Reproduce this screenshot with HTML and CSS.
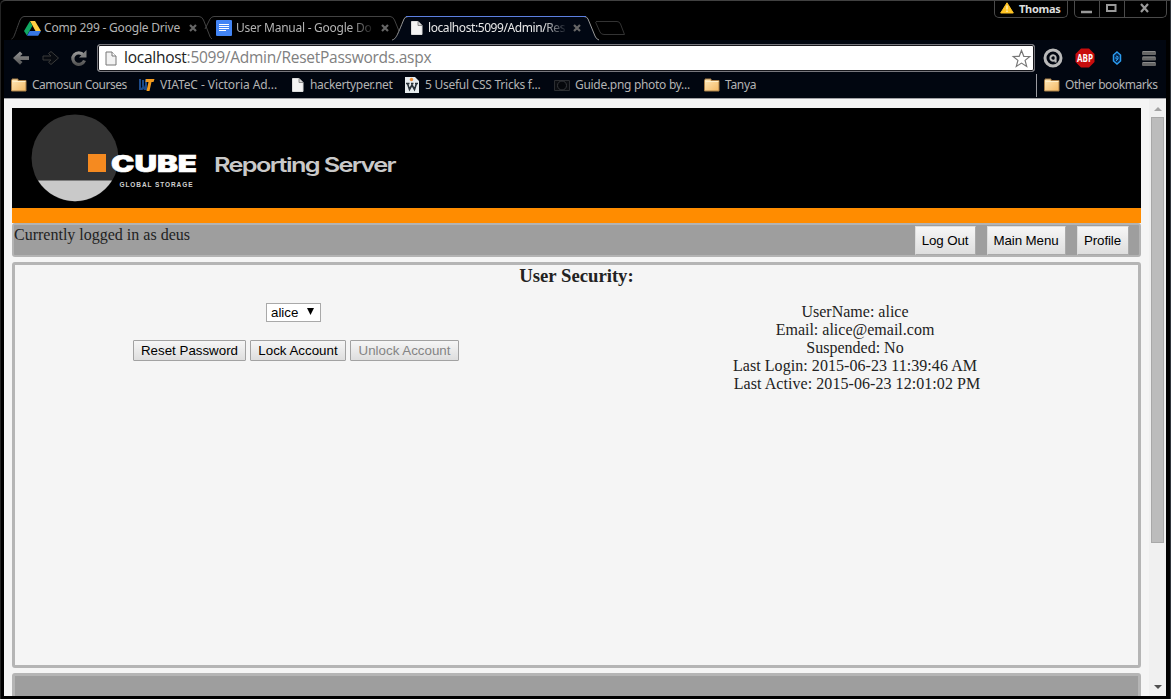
FILE: index.html
```html
<!DOCTYPE html>
<html lang="en">
<head>
<meta charset="utf-8">
<title>localhost:5099/Admin/ResetPasswords.aspx</title>
<link rel="stylesheet" href="styles.css">
</head>
<body>
<svg class="defs" width="0" height="0">
  <defs>
    <linearGradient id="fold" x1="0" y1="0" x2="1" y2="1"><stop offset="0" stop-color="#ffe9bb"/><stop offset="1" stop-color="#f3b863"/></linearGradient>
    <linearGradient id="mute" x1="0" y1="0" x2="0" y2="1"><stop offset="0" stop-color="#959595"/><stop offset="1" stop-color="#555"/></linearGradient>
  </defs>
  <symbol id="folder" viewBox="0 0 16 14"><path d="M1 2V1h6v1.500h8V13H.5V2.500z" fill="url(#fold)" stroke="#a87f49"/><path d="M1.500 3.500h13" stroke="#fff0cb"/></symbol>
  <symbol id="file" viewBox="0 0 12 14"><path d="M.5.500h6.500l4 4v9H.5z" fill="#f4f4f4" stroke="#ddd"/><path d="M7 .5v4h4" fill="#d5d5d5" stroke="#777" stroke-width=".8"/></symbol>
  <symbol id="close" viewBox="0 0 8 8"><path d="M1 1l6 6M7 1L1 7" stroke="#666" stroke-width="2.200"/></symbol>
  <symbol id="warn" viewBox="0 0 14 12"><path d="M7 .8L13.300 11H.7z" fill="#ffc425" stroke="#ffc425" stroke-linejoin="round"/><path d="M7 3.500v4M7 8.500v1.500" stroke="#fff3c5" stroke-width="1.300"/></symbol>
</svg>
<div class="window">
  <header class="titlebar">
    <div class="tabs">
      <div class="tab">
        <svg class="tab-shape" width="208" height="25"><path d="M-.5 23C2 22 2 20 8 4Q9.500.500 12 .5H187Q190 .5 191.500 4L197 18Q198 22 200 23" fill="none" stroke="#434343"/></svg>
        <svg class="tab-icon" width="17" height="15" viewBox="0 0 17 15"><path d="M6 0h5l6 10h-5.500z" fill="#ffcf43"/><path d="M5.800.200L8.500 4.700 2.900 14.500 0 10z" fill="#11a861"/><path d="M5.700 10H17l-2.800 4.700H3z" fill="#3777e3"/></svg>
        <span class="tab-title t1">Comp 299 - Google Drive</span>
        <svg class="tab-close" width="8" height="8"><use href="#close"/></svg>
      </div>
      <div class="tab">
        <svg class="tab-shape" width="208" height="25"><path d="M1 13L6 3Q7.500.500 10 .5H186Q189 .5 190.500 4L195 15" fill="none" stroke="#434343"/></svg>
        <svg class="tab-icon" width="17" height="16" viewBox="0 0 17 16"><rect x="0" width="16" height="16" rx="1" fill="#4385f5"/><path d="M3 4.500h10M3 6.500h10M3 8.500h10M3 10.500h7" stroke="#fff"/></svg>
        <span class="tab-title t2 fade">User Manual - Google Do</span>
        <svg class="tab-close" width="8" height="8"><use href="#close"/></svg>
      </div>
      <div class="tab active">
        <svg class="tab-shape" width="212" height="25"><path d="M-4 24C0 23 1 20 8 3Q9 .5 12 .5H188Q191 .5 192 3L199 20Q200 23 203 24" fill="#010713" stroke="#999"/><path d="M10 .5H190" stroke="#5c7fe0"/></svg>
        <svg class="tab-icon" width="17" height="14" viewBox="0 0 17 14"><use href="#file" width="12" height="14"/></svg>
        <span class="tab-title t3 fade">localhost:5099/Admin/Res</span>
        <svg class="tab-close" width="8" height="8"><use href="#close"/></svg>
      </div>
      <svg class="newtab" width="32" height="16"><path d="M2 .5H23Q25.500.500 26.500 3L30.500 13.500H10Q7 13.500 6 11L1.500 1" fill="none" stroke="#333"/></svg>
    </div>
    <div class="profile"><svg width="14" height="12"><use href="#warn"/></svg><span>Thomas</span></div>
    <div class="controls">
      <span class="ctl min"><svg width="11" height="10"><path d="M0 8h11" stroke="#999" stroke-width="2.500"/></svg></span>
      <span class="ctl max"><svg width="11" height="10"><rect x="1" y="1" width="8.500" height="6" fill="none" stroke="#999" stroke-width="2"/></svg></span>
      <span class="ctl shut"><svg width="10" height="10"><path d="M1 0l7 8M8 0L1 8" stroke="#999" stroke-width="2.200"/></svg></span>
    </div>
  </header>
  <div class="toolbar">
    <svg class="nav back" width="17" height="14"><path d="M0 7L7 .5 9.500 3 7 5.200H16V9H7L9.500 11 7 13.700z" fill="url(#mute)"/></svg>
    <svg class="nav forward" width="18" height="14"><path d="M1 5H9L6.500 2.500 9 .5 16.500 7 9 13.500 6.500 11.200 9 9H1z" fill="#080b11" stroke="#3b3b3b"/></svg>
    <svg class="nav reload" width="17" height="16"><path d="M12.500 5A6 5.700 0 1 0 13.500 10.500" fill="none" stroke="url(#mute)" stroke-width="3.200"/><path d="M15.500 0V7.500H8z" fill="#808080"/></svg>
    <div class="omnibox">
      <svg width="12" height="15" viewBox="0 0 12 15"><path d="M1 1h6l4 4v9H1z" fill="#f2f2f2" stroke="#777"/><path d="M7 1v4h4" fill="#fff" stroke="#777"/></svg>
      <span class="url"><b>localhost</b>:5099/Admin/ResetPasswords.aspx</span>
      <svg class="star" width="19" height="19" viewBox="0 0 19 19"><path d="M9.500 1.500l2.300 5.800 6 .2-4.700 3.900 1.600 6-5.200-3.300-5.200 3.300 1.600-6L1.200 7.500l6-.2z" fill="#fff" stroke="#777" stroke-width="1.200"/></svg>
    </div>
    <svg class="ext" width="20" height="20"><circle cx="10" cy="10" r="8" fill="none" stroke="#b9b9b9" stroke-width="3"/><path d="M12.600 11A2.700 2.700 0 1 1 12.600 9V14.500" fill="none" stroke="#b9b9b9" stroke-width="2"/></svg>
    <svg class="ext abp" width="20" height="20"><path d="M6 .5h8L19.500 6v8L14 19.500H6L.5 14V6z" fill="#c80d0d"/><text x="10" y="13.500" text-anchor="middle" textLength="16" lengthAdjust="spacingAndGlyphs">ABP</text></svg>
    <svg class="ext drop" width="10" height="14"><path d="M5 1L8.500 4V10L5 13 1.500 10V4z" fill="#06244a" stroke="#2b9cf0" stroke-width="1.500"/><path d="M4 5q3 0 2 3l-2 2M4 6v2h2" fill="none" stroke="#2b9cf0"/></svg>
    <svg class="ext menu" width="14" height="15"><rect y="0" width="14" height="4" rx="1" fill="#666"/><rect y="5.500" width="14" height="4" rx="1" fill="#666"/><rect y="11" width="14" height="4" rx="1" fill="#666"/><path d="M1 .5h12M1 6h12M1 11.500h12" stroke="#999" stroke-width=".7"/></svg>
  </div>
  <nav class="bookmarks">
    <a class="bm b1"><svg width="16" height="14"><use href="#folder"/></svg><span>Camosun Courses</span></a>
    <a class="bm b2"><svg width="17" height="14"><path d="M2 1v10h2l1.500-3L6.500 11H8V1M5 2v6" fill="none" stroke="#1c4a8a" stroke-width="2"/><path d="M8 1h8.500l-1 3h-2l-2 9H8.500l2-9H7.500z" fill="#f39a1e"/></svg><span>VIATeC - Victoria Ad...</span></a>
    <a class="bm b3"><svg width="12" height="14"><use href="#file"/></svg><span>hackertyper.net</span></a>
    <a class="bm b4"><svg width="14" height="16"><path d="M0 0h10l4 4v12H0z" fill="#e6ebee"/><circle cx="6.500" cy="2.500" r="1.700" fill="#ed8b32"/><path d="M2.500 6.500l2 6L7 8l2.500 4.500 2-6M1 6.500h3.500M6 6.500h2.500M10 6.500h3" fill="none" stroke="#29323a" stroke-width="1.600"/></svg><span>5 Useful CSS Tricks f...</span></a>
    <a class="bm b5"><svg width="16" height="13"><path d="M.5 1.500h15v10H.5z" fill="#0b0d11" stroke="#2b2d31"/><circle cx="8" cy="6.500" r="4.500" fill="#05070b" stroke="#36383c"/></svg><span>Guide.png photo by...</span></a>
    <a class="bm b6"><svg width="16" height="14"><use href="#folder"/></svg><span>Tanya</span></a>
    <a class="bm other"><svg width="16" height="14"><use href="#folder"/></svg><span>Other bookmarks</span></a>
  </nav>
  <div class="viewport">
    <div class="page">
      <div class="banner">
        <svg width="400" height="100">
          <circle cx="63" cy="50" r="43.500" fill="#333"/>
          <path d="M26 72.500H100A43.500 43.500 0 0 1 26 72.500z" fill="#c9c9c9"/>
          <rect x="76" y="46" width="18" height="18" fill="#f58a20"/>
          <text class="logo-name" x="99" y="63.500" textLength="86" lengthAdjust="spacingAndGlyphs">CUBE</text>
          <text class="logo-sub" x="107.500" y="79" textLength="73" lengthAdjust="spacing">GLOBAL STORAGE</text>
          <text class="logo-title" x="202" y="64" textLength="181" lengthAdjust="spacingAndGlyphs">Reporting Server</text>
        </svg>
      </div>
      <div class="stripe"></div>
      <div class="userbar">
        <span class="login">Currently logged in as deus</span>
        <button class="link w1">Log Out</button>
        <button class="link w2">Main Menu</button>
        <button class="link w3">Profile</button>
      </div>
      <main class="panel">
        <h3>User Security:</h3>
        <div class="columns">
          <section class="actions">
            <div class="select"><span>alice</span><svg width="7" height="7"><path d="M0 0h7L3.500 7z" fill="#000"/></svg></div>
            <div class="row">
              <button class="btn r1">Reset Password</button>
              <button class="btn r2">Lock Account</button>
              <button class="btn r3" disabled>Unlock Account</button>
            </div>
          </section>
          <section class="details">
            <div><span>UserName: alice</span></div>
            <div><span>Email: alice@email.com</span></div>
            <div><span>Suspended: No</span></div>
            <div class="wide"><span>Last Login: 2015-06-23 11:39:46 AM</span></div>
            <div class="wide last"><span>Last Active: 2015-06-23 12:01:02 PM</span></div>
          </section>
        </div>
      </main>
      <footer class="foot"></footer>
    </div>
    <div class="scrollbar">
      <svg width="8" height="4"><path d="M0 4L4 0l4 4z" fill="#a3a3a3"/></svg>
      <div class="thumb"></div>
      <svg class="down" width="8" height="4"><path d="M0 0h8L4 4z" fill="#505050"/></svg>
    </div>
  </div>
</div>
</body>
</html>
```
FILE: styles.css
```css
* { box-sizing: border-box; }
body { margin: 0; background: #000; overflow: hidden; }
.defs { display: block; position: absolute; }
svg { flex: none; display: block; overflow: visible; }
.window {
  width: 1171px; height: 699px; padding: 0 5px 3px 4px;
  background: #000; border-top: 1px solid #414141; border-radius: 5px 0 0 0;
  box-shadow: inset 1px 0 #242424, inset -1px 0 #30363c;
  display: flex; flex-direction: column;
  font-family: "Noto Sans", "Open Sans", sans-serif; font-size: 12px; color: #b3b3b3;
}
.titlebar { height: 39px; flex: none; display: flex; align-items: flex-start; width: 1163px; }
.tabs { display: flex; padding: 15px 0 0 8px; flex: 1; }
.tab { width: 192px; height: 24px; position: relative; display: flex; align-items: center; padding-left: 12px; }
.tab-shape { position: absolute; left: 0; top: 0; }
.active { z-index: 1; color: #e8e8e8; width: 191px; padding-left: 15px; }
.tab-icon, .tab-title, .tab-close { position: relative; }
.tab-title { margin-left: 3px; width: 137px; white-space: nowrap; line-height: 20px; }
.t1 { letter-spacing: -.2px; }
.t2 { letter-spacing: -.26px; }
.t3 { letter-spacing: -.42px; }
.active .tab-title { margin-left: 0; }
.tab-close { margin-left: 8px; }
.fade { -webkit-mask-image: linear-gradient(90deg, #000 84%, transparent 102%); mask-image: linear-gradient(90deg, #000 84%, transparent 102%); }
.newtab { margin-top: 5px; margin-left: 7px; }
.profile {
  width: 74px; height: 17px; border: 1px solid #4a4a4a; border-top: 0; border-radius: 0 0 5px 5px;
  display: flex; align-items: center; gap: 5px; padding: 0 0 2px 5px; margin-right: 6px;
  color: #ddd; font-weight: 700; font-size: 11px; letter-spacing: -.3px;
}
.controls { width: 93px; height: 17px; display: flex; border: 1px solid #4a4a4a; border-top: 0; border-radius: 0 0 5px 5px; }
.ctl { display: flex; align-items: center; justify-content: center; border-right: 1px solid #4a4a4a; padding-right: 2px; }
.min { width: 25px; }
.max { width: 25px; }
.shut { flex: 1; border: 0; }
.toolbar {
  height: 33px; flex: none; display: flex; align-items: center; background: #010610;
  padding-left: 9px; padding-top: 3px;
}
.forward { margin-left: 12px; }
.reload { margin-left: 11px; }
.omnibox {
  width: 938px; height: 28px; margin: 0 0 0 9px; border: 1px solid #77777d; border-radius: 3px;
  background: #fff; display: flex; align-items: center; padding: 0 3px 0 7px; box-shadow: inset 0 0 0 1px #17171c;
}
.url { flex: 1; margin-left: 7px; font-family: "Open Sans", sans-serif; font-size: 15.500px; letter-spacing: -.26px; line-height: 20px; padding-bottom: 2px; color: #808080; white-space: nowrap; }
.url b { font-weight: 400; color: #222; }
.ext { margin-left: 8px; }
.abp { margin-left: 12px; }
.abp text { font: 700 10px "Open Sans", sans-serif; fill: #fff; }
.drop { margin-left: 17px; }
.menu { margin-left: 20px; }
.bookmarks { height: 26px; flex: none; display: flex; align-items: center; background: #010610; padding: 0 8px 1px 7px; border-bottom: 1px solid #a0a0a4; }
.bm { display: flex; align-items: center; gap: 5px; white-space: nowrap; flex: none; height: 23px; letter-spacing: -.33px; }
.bm span { line-height: 16px; padding-bottom: 1px; }
.b1 { width: 127px; letter-spacing: -.48px; }
.b2 { width: 154px; letter-spacing: -.07px; }
.b3 { width: 113px; gap: 6px; }
.b4 { width: 149px; gap: 6px; letter-spacing: -.26px; }
.b5 { width: 150px; letter-spacing: -.3px; }
.b6 { letter-spacing: -.3px; }
.other { margin-left: auto; border-left: 1px solid #9a9aa0; padding-left: 7px; letter-spacing: -.46px; width: 122px; }
.viewport { flex: 1; min-height: 0; display: flex; background: #f5f5f5; width: 1162px; overflow: hidden; }
.page { width: 1145px; flex: none; padding: 9px 8px 0; color: #222; font: 16px/18px "Liberation Serif", serif; }
.banner { height: 100px; background: #000; }
.logo-name { font: 900 23px Inter, "Liberation Sans", sans-serif; fill: #fff; stroke: #fff; stroke-width: .6px; }
.logo-sub { font: 700 6.500px "Liberation Sans", sans-serif; fill: #d0d0d0; }
.logo-title { font: 600 20px Inter, "Liberation Sans", sans-serif; letter-spacing: -1.300px; fill: #c9c9c9; }
.stripe { height: 15px; background: #ff8c00; }
.userbar { height: 34px; background: #9e9e9e; border: 2px solid #b3b3b3; border-radius: 3px; display: flex; gap: 11px; padding: 1px 10px 0 0; }
.login { flex: 1; line-height: 17px; }
.link { height: 29px; padding: 0 1px 0 0; border: 1px solid #aaa; border-top-color: #ddd; border-left-color: #ddd; background: linear-gradient(#f6f6f6, #dedede); color: #000; font: 13.333px "Liberation Sans", sans-serif; letter-spacing: -.1px; }
.w1 { width: 61px; }
.w2 { width: 79px; }
.w3 { width: 52px; }
.panel { height: 406px; margin-top: 5px; border: 3px solid #b5b5b5; border-radius: 3px; }
h3 { margin: 0; font-size: 18.720px; line-height: 22px; text-align: center; }
.columns { display: flex; margin-top: 16px; }
.actions { width: 557px; display: flex; flex-direction: column; align-items: center; }
.select { width: 55px; height: 19px; border: 1px solid #a9a9a9; background: #fff; display: flex; align-items: center; gap: 9px; padding-left: 4px; font: 13.333px "Liberation Sans", sans-serif; color: #000; }
.select svg { margin-top: -2px; }
.row { display: flex; gap: 4px; margin: 18px 0 0 5px; }
.btn { height: 21px; padding: 0; border: 1px solid #a2a2a2; border-radius: 1px; background: linear-gradient(#f6f6f6, #dedede); color: #000; font: 13.333px "Liberation Sans", sans-serif; }
.btn:disabled { color: #848484; }
.r1 { width: 113px; }
.r2 { width: 96px; }
.r3 { width: 109px; }
.details { flex: 1; text-align: center; }
.wide { letter-spacing: .06px; }
.last { padding-left: 4px; }
.foot { height: 60px; margin-top: 5px; background: #9e9e9e; border: 3px solid #b5b5b5; border-radius: 3px; }
.scrollbar { width: 17px; background: #f0f0f0; display: flex; flex-direction: column; align-items: center; padding: 8px 0 7px; }
.thumb { width: 13px; height: 426px; margin-top: 6px; background: #bcbcbc; border: 1px solid #a8a8a8; }
.down { margin-top: auto; }
```
